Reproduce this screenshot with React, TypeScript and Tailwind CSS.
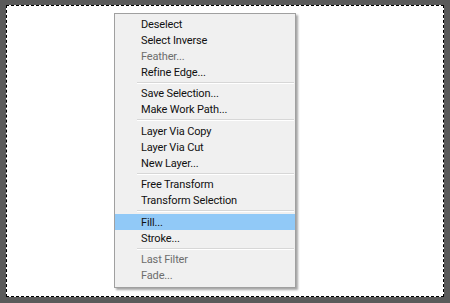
import React from "react";

type Item = { label: string; disabled?: boolean; active?: boolean };

// Context menu groups, split by separators
const groups: Item[][] = [
  [
    { label: "Deselect" },
    { label: "Select Inverse" },
    { label: "Feather...", disabled: true },
    { label: "Refine Edge..." },
  ],
  [{ label: "Save Selection..." }, { label: "Make Work Path..." }],
  [{ label: "Layer Via Copy" }, { label: "Layer Via Cut" }, { label: "New Layer..." }],
  [{ label: "Free Transform" }, { label: "Transform Selection" }],
  [{ label: "Fill...", active: true }, { label: "Stroke..." }],
  [
    { label: "Last Filter", disabled: true },
    { label: "Fade...", disabled: true },
  ],
];

function MenuRow({ item }: { item: Item }) {
  return (
    <div
      className={`h-[16px] flex items-center pl-[26px] pr-4 leading-none ${
        item.active ? "bg-[#91c9f7]" : ""
      } ${item.disabled ? "text-[#6d6d6d]" : "text-[#111]"}`}
    >
      {item.label}
    </div>
  );
}

export default function App() {
  return (
    <main className="w-[450px] h-[303px] bg-[#5a5a5a] pt-[5px] pl-[6px] overflow-hidden">
      {/* canvas with marching ants */}
      <div className="relative w-[438px] h-[292px] bg-white border border-dashed border-black">
        <div
          className="absolute left-[107px] top-[7px] w-[182px] bg-[#f0f0f0] border border-[#a0a0a0] pt-[2px] pb-[3.5px]
          shadow-[2px_2px_2px_rgba(0,0,0,0.35)] text-[11px] tracking-[-0.15px]"
          style={{ fontFamily: 'Roboto, "Noto Sans", sans-serif' }}
        >
          {groups.map((g, gi) => (
            <div key={gi}>
              {gi > 0 && (
                <div className="h-[5.5px] flex flex-col justify-center pl-[22px] pr-[1px]">
                  <div className="h-[1px] bg-[#d7d7d7]" />
                  <div className="h-[1px] bg-white" />
                </div>
              )}
              {g.map((it) => (
                <MenuRow key={it.label} item={it} />
              ))}
            </div>
          ))}
        </div>
      </div>
    </main>
  );
}
